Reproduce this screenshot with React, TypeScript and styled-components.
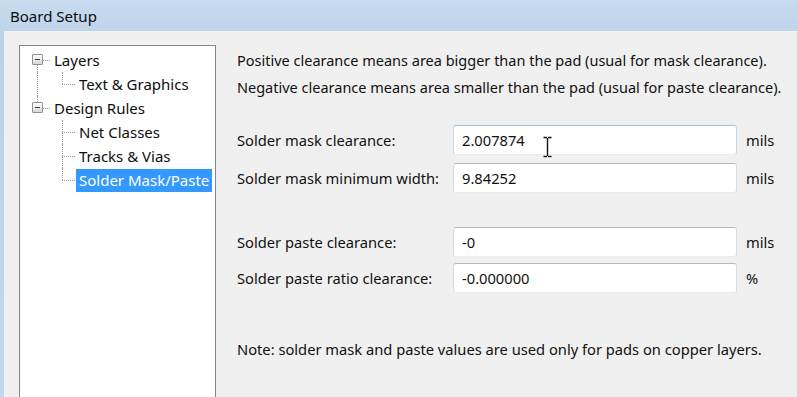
import React from "react";
import styled, { createGlobalStyle } from "styled-components";

const FONT = `"Noto Sans", "Open Sans", Arial, sans-serif`;

const GlobalStyle = createGlobalStyle`
  html, body {
    margin: 0;
    padding: 0;
    overflow: hidden;
    background: #c3d7ec;
  }
  body {
    font-family: ${FONT};
    color: #111;
  }
`;

interface TreeItem {
  label: string;
  children?: TreeItem[];
  selected?: boolean;
}

interface CellProps {
  $up?: boolean;
  $down?: boolean;
  $dash?: boolean;
}

interface FieldProps {
  $focused?: boolean;
}

const tree: TreeItem[] = [
  { label: "Layers", children: [{ label: "Text & Graphics" }] },
  {
    label: "Design Rules",
    children: [
      { label: "Net Classes" },
      { label: "Tracks & Vias" },
      { label: "Solder Mask/Paste", selected: true },
    ],
  },
];

const fields = [
  { label: "Solder mask clearance:", value: "2.007874", unit: "mils", focused: true },
  { label: "Solder mask minimum width:", value: "9.84252", unit: "mils" },
];

const pasteFields = [
  { label: "Solder paste clearance:", value: "-0", unit: "mils" },
  { label: "Solder paste ratio clearance:", value: "-0.000000", unit: "%" },
];

const IBeam = () => (
  <svg width="9" height="22" viewBox="0 0 9 22">
    <path
      d="M0.5 1.5h3.5M5 1.5h3.5M4.5 2v18M0.5 20.5h3.5M5 20.5h3.5"
      stroke="#fff"
      strokeWidth="3"
      fill="none"
    />
    <path
      d="M0.5 1.5h3.5M5 1.5h3.5M4.5 2v18M0.5 20.5h3.5M5 20.5h3.5"
      stroke="#111"
      strokeWidth="1.4"
      fill="none"
    />
  </svg>
);

const App = (): React.JSX.Element => {
  const rootCount = tree.length;
  return (
    <Window>
      <GlobalStyle />
      <TitleBar>Board Setup</TitleBar>
      <Client>
        <TreeBox>
          {tree.map((node, i) => {
            const hasNext = i < rootCount - 1;
            return (
              <React.Fragment key={node.label}>
                <TreeRow>
                  <Cell $up={i > 0} $down={hasNext} $dash>
                    <Expander />
                  </Cell>
                  <TreeLabel>{node.label}</TreeLabel>
                </TreeRow>
                {node.children?.map((child, j) => (
                  <TreeRow key={child.label}>
                    <Cell $up={hasNext} $down={hasNext} />
                    <Cell
                      $up
                      $down={j < (node.children?.length ?? 0) - 1}
                      $dash
                    />
                    <TreeLabel $selected={child.selected}>
                      {child.label}
                    </TreeLabel>
                  </TreeRow>
                ))}
              </React.Fragment>
            );
          })}
        </TreeBox>
        <Panel>
          <Intro>
            <div>
              Positive clearance means area bigger than the pad (usual for mask
              clearance).
            </div>
            <div>
              Negative clearance means area smaller than the pad (usual for
              paste clearance).
            </div>
          </Intro>
          <FieldGrid $top={24} $gap={8}>
            {fields.map((f) => (
              <React.Fragment key={f.label}>
                <FieldLabel>{f.label}</FieldLabel>
                <FieldWrap>
                  <Field $focused={f.focused}>{f.value}</Field>
                  {f.focused && (
                    <Cursor>
                      <IBeam />
                    </Cursor>
                  )}
                </FieldWrap>
                <Unit>{f.unit}</Unit>
              </React.Fragment>
            ))}
          </FieldGrid>
          <FieldGrid $top={34} $gap={6}>
            {pasteFields.map((f) => (
              <React.Fragment key={f.label}>
                <FieldLabel>{f.label}</FieldLabel>
                <FieldWrap>
                  <Field>{f.value}</Field>
                </FieldWrap>
                <Unit>{f.unit}</Unit>
              </React.Fragment>
            ))}
          </FieldGrid>
          <Note>
            Note: solder mask and paste values are used only for pads on copper
            layers.
          </Note>
        </Panel>
      </Client>
    </Window>
  );
};

const Window = styled.div`
  width: 797px;
  height: 397px;
  overflow: hidden;
  display: flex;
  flex-direction: column;
  background: linear-gradient(#c8dbef, #bcd2ea 40px, #c3d7ec);
`;

const TitleBar = styled.div`
  height: 31px;
  flex: none;
  display: flex;
  align-items: center;
  padding-left: 10px;
  font-size: 15px;
  color: #0c0c0c;
`;

const Client = styled.div`
  flex: 1;
  margin-left: 4px;
  background: #f0f0f0;
  display: flex;
  padding: 14px 0 0 15px;
  min-height: 0;
`;

const TreeBox = styled.div`
  width: 195px;
  flex: none;
  background: #fff;
  border: 1px solid #828790;
  border-bottom: none;
  padding-top: 2px;
  margin-bottom: -20px;
`;

const TreeRow = styled.div`
  height: 24px;
  display: flex;
  align-items: center;
  padding-left: 5px;
`;

const Cell = styled.span<CellProps>`
  position: relative;
  flex: none;
  width: 25px;
  height: 24px;

  &::before {
    content: "";
    position: absolute;
    left: 12px;
    top: ${(p) => (p.$up ? "0" : "12px")};
    bottom: ${(p) => (p.$down ? "0" : "12px")};
    border-left: 1px dotted #9a9a9a;
    display: ${(p) => (p.$up || p.$down ? "block" : "none")};
  }

  &::after {
    content: "";
    position: absolute;
    left: 12px;
    right: 0;
    top: 12px;
    border-top: 1px dotted #9a9a9a;
    display: ${(p) => (p.$dash ? "block" : "none")};
  }
`;

const Expander = styled.span`
  position: absolute;
  z-index: 1;
  left: 7px;
  top: 6px;
  width: 9px;
  height: 9px;
  border: 1px solid #919191;
  border-radius: 1px;
  background: linear-gradient(#fdfdfd, #d9d9d9);

  &::after {
    content: "";
    position: absolute;
    left: 2px;
    right: 2px;
    top: 4px;
    height: 1px;
    background: #3c3c3c;
  }
`;

const TreeLabel = styled.span<{ $selected?: boolean }>`
  margin-left: 1px;
  padding: 0 3px;
  height: 23px;
  display: flex;
  align-items: center;
  font-size: 15px;
  white-space: nowrap;
  color: ${(p) => (p.$selected ? "#fff" : "#0e0e0e")};
  background: ${(p) => (p.$selected ? "#3399ff" : "transparent")};
`;

const Panel = styled.div`
  flex: 1;
  padding: 2px 0 0 21px;
  font-size: 14.7px;
`;

const Intro = styled.div`
  line-height: 27px;
  font-size: 14.5px;
  white-space: nowrap;
`;

const FieldGrid = styled.div<{ $top: number; $gap: number }>`
  display: grid;
  grid-template-columns: 216px 284px auto;
  row-gap: ${(p) => p.$gap}px;
  align-items: center;
  margin-top: ${(p) => p.$top}px;
`;

const FieldLabel = styled.div`
  white-space: nowrap;
`;

const FieldWrap = styled.div`
  position: relative;
`;

const Field = styled.div<FieldProps>`
  box-sizing: border-box;
  height: 30px;
  padding: 0 8px;
  display: flex;
  align-items: center;
  background: #fff;
  border: 1px solid #e2e3ea;
  border-top-color: ${(p) => (p.$focused ? "#9fc2e4" : "#b5b8bf")};
  border-left-color: ${(p) => (p.$focused ? "#c5daed" : "#dadce2")};
  border-right-color: ${(p) => (p.$focused ? "#c5daed" : "#dadce2")};
  border-bottom-color: #e8ebef;
  border-radius: 3px;
`;

const Cursor = styled.span`
  position: absolute;
  left: 90px;
  top: 11px;
  line-height: 0;
`;

const Unit = styled.div`
  padding-left: 9px;
`;

const Note = styled.div`
  margin-top: 46px;
`;

export default App;
